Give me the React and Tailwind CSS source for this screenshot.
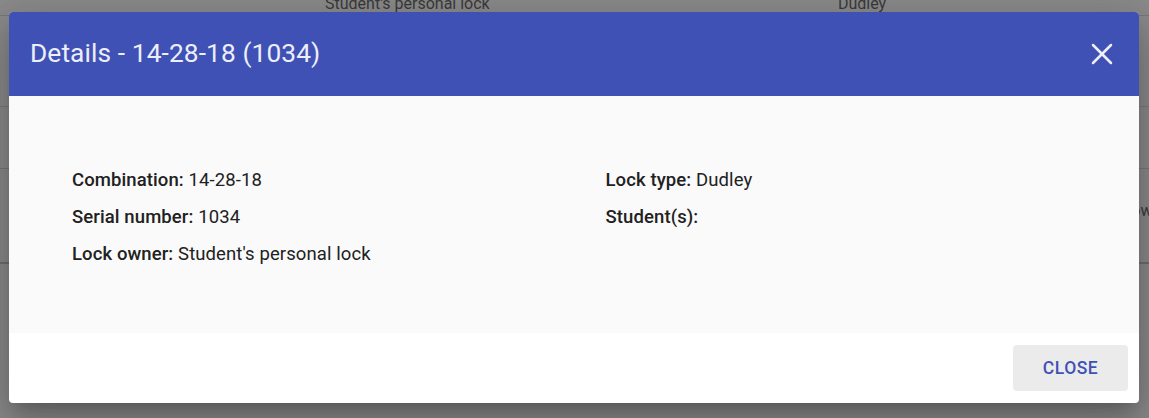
import React from "react";
import { X } from "lucide-react";

const leftFields = [
  { label: "Combination:", value: "14-28-18" },
  { label: "Serial number:", value: "1034" },
  { label: "Lock owner:", value: "Student's personal lock" },
];

const rightFields = [
  { label: "Lock type:", value: "Dudley" },
  { label: "Student(s):", value: "" },
];

const Field = ({ label, value }) => (
  <p className="h-[24px] leading-[24px] text-[18.5px] text-[#212121] tracking-[0.1px]">
    <span className="font-medium">{label}</span> {value}
  </p>
);

const App = () => {
  return (
    <div
      className="relative w-[1149px] h-[418px] overflow-hidden bg-[#8a8a8a]"
      style={{ fontFamily: "Roboto, 'Noto Sans', sans-serif" }}
    >
      {/* Page behind the backdrop */}
      <div className="flex flex-col text-[16px] text-[#3a3a3a]">
        <div className="h-[16px] border-b border-[#777] relative">
          <span className="absolute left-[325px] -top-[8px]">Student's personal lock</span>
          <span className="absolute left-[838px] -top-[8px]">Dudley</span>
        </div>
        <div className="h-[91px] border-b border-[#7a7a7a]" />
        <div className="h-[62px] border-b border-[#777]" />
        <div className="h-[95px] border-b-2 border-[#6e6e6e] relative">
          <span className="absolute left-[1113px] top-[30px]">Shows</span>
        </div>
      </div>

      {/* Dialog */}
      <div className="absolute left-[9px] top-[12px] w-[1130px] h-[391px] rounded-[4px] overflow-hidden bg-white flex flex-col shadow-[0_11px_15px_-7px_rgba(0,0,0,0.2),0_24px_38px_3px_rgba(0,0,0,0.14),0_9px_46px_8px_rgba(0,0,0,0.12)]">
        <div className="h-[84px] bg-[#3f51b5] flex items-center justify-between pl-[21px] pr-[19px]">
          <h2 className="text-[26.3px] text-[#eceef8] font-normal tracking-[0.1px]">
            Details - 14-28-18 (1034)
          </h2>
          <X className="w-[36px] h-[36px] text-[#eceef8]" strokeWidth={1.7} />
        </div>
        <div className="h-[237px] bg-[#fafafa] pt-[72px] pl-[63px] grid grid-cols-2">
          <div className="flex flex-col gap-[13px]">
            {leftFields.map((f) => (
              <Field key={f.label} {...f} />
            ))}
          </div>
          <div className="flex flex-col gap-[13px]">
            {rightFields.map((f) => (
              <Field key={f.label} {...f} />
            ))}
          </div>
        </div>
        <div className="flex-1 flex items-center justify-end pr-[11px]">
          <button className="w-[115px] h-[46px] rounded-[4px] bg-[#ebebeb] text-[#3f51b5] text-[17.5px] font-medium tracking-[0.5px]">
            CLOSE
          </button>
        </div>
      </div>
    </div>
  );
};

export default App;
